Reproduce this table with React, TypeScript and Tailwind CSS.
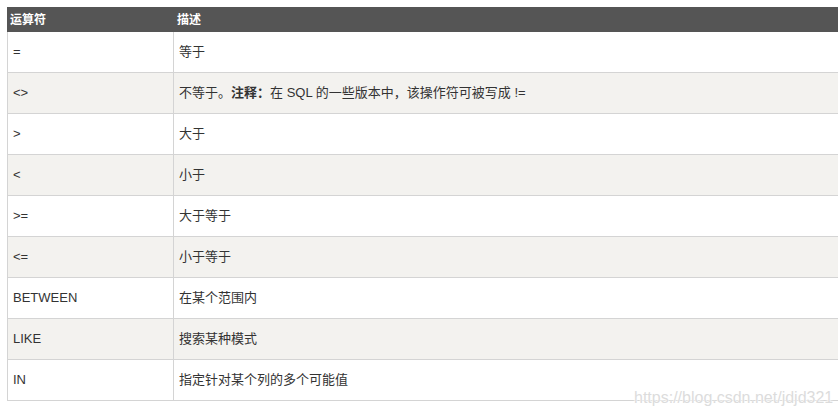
import React from "react";

const rows: { op: string; desc: React.ReactNode }[] = [
  { op: "=", desc: "等于" },
  {
    op: "<>",
    desc: (
      <>
        不等于。<b className="font-bold">注释：</b>在 SQL 的一些版本中，该操作符可被写成 !=
      </>
    ),
  },
  { op: ">", desc: "大于" },
  { op: "<", desc: "小于" },
  { op: ">=", desc: "大于等于" },
  { op: "<=", desc: "小于等于" },
  { op: "BETWEEN", desc: "在某个范围内" },
  { op: "LIKE", desc: "搜索某种模式" },
  { op: "IN", desc: "指定针对某个列的多个可能值" },
];

export default function App() {
  return (
    <div
      className="relative w-[838px] h-[415px] overflow-hidden bg-white pt-[7px] pl-[7px]"
      style={{ fontFamily: '"Liberation Sans", "Noto Sans CJK SC", sans-serif' }}
    >
      <div className="w-[840px]">
        <div className="flex h-[25px] bg-[#555555] text-white text-[12px] font-bold items-center">
          <div className="w-[167px] pl-[3px]">运算符</div>
          <div className="flex-1 pl-[3px]">描述</div>
        </div>
        {rows.map((r, i) => (
          <div
            key={i}
            className={`flex h-[41px] border-l border-b border-[#d4d4d4] text-[13px] text-[#333333] ${
              i % 2 === 1 ? "bg-[#f3f2ef]" : "bg-white"
            }`}
          >
            <div className="w-[166px] border-r border-[#d4d4d4] pl-[5px] flex items-center">
              {r.op}
            </div>
            <div className="flex-1 pl-[5px] flex items-center">{r.desc}</div>
          </div>
        ))}
      </div>
      <div
        className="absolute left-[634px] top-[388px] text-[16px] leading-[20px] text-[#dcdcdc]"
        style={{ textShadow: "0 0 2px #fff, 0 0 2px #fff, 0 0 1px #fff" }}
      >
        https://blog.csdn.net/jdjd321
      </div>
    </div>
  );
}
